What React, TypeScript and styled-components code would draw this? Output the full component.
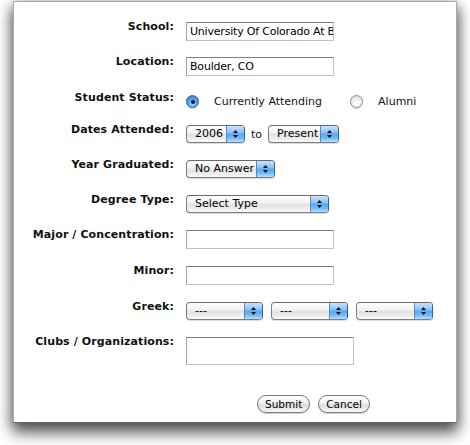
import React from "react";
import styled, { createGlobalStyle } from "styled-components";

const Global = createGlobalStyle`
  html, body { margin: 0; padding: 0; background: #fff; }
  body { font-family: "DejaVu Sans", Verdana, sans-serif; }
`;

const Page = styled.div`
  width: 470px;
  height: 445px;
  overflow: hidden;
  padding: 1px 0 0 13px;
  box-sizing: border-box;
`;

const Panel = styled.div`
  width: 444px;
  height: 422px;
  box-sizing: border-box;
  background: #fff;
  border: 1px solid #a9a9a9;
  border-bottom-color: #666;
  box-shadow: 0 9px 14px 1px rgba(0, 0, 0, 0.6), 0 2px 12px rgba(0, 0, 0, 0.3);
  padding-top: 20px;
  display: flex;
  flex-direction: column;
`;

const Row = styled.div<{ $h: number }>`
  display: grid;
  grid-template-columns: 160px auto;
  column-gap: 12px;
  align-items: start;
  height: ${(p) => p.$h}px;
  flex: none;
`;

const Label = styled.div`
  text-align: right;
  font: bold 11px/13px "DejaVu Sans", Verdana, sans-serif;
  letter-spacing: 0.1px;
  color: #111;
  margin-top: -2px;
  white-space: nowrap;
`;

const Controls = styled.div<{ $gap?: number; $pt?: number }>`
  display: flex;
  align-items: center;
  gap: ${(p) => p.$gap ?? 0}px;
  padding-top: ${(p) => p.$pt ?? 0}px;
`;

const TextInput = styled.div<{ $w: number; $h?: number }>`
  width: ${(p) => p.$w}px;
  height: ${(p) => p.$h ?? 19}px;
  box-sizing: border-box;
  border: 1px solid #c2c2c2;
  border-top-color: #7e7e7e;
  border-left-color: #a4a4a4;
  background: #fff;
  font: 11px/17px "DejaVu Sans", Verdana, sans-serif;
  letter-spacing: -0.2px;
  color: #000;
  padding-left: 3px;
  white-space: nowrap;
  overflow: hidden;
`;

const Popup = styled.div<{ $w: number }>`
  display: inline-flex;
  width: ${(p) => p.$w}px;
  height: 18px;
  box-sizing: border-box;
  border: 1px solid #7d7d7d;
  border-top-color: #6a6a6a;
  border-right-color: #2d5ea8;
  border-radius: 4px;
  overflow: hidden;
  background: linear-gradient(#ffffff, #f3f3f3 40%, #e2e2e2 55%, #ededed 80%, #fafafa);
  box-shadow: 0 1px 1px rgba(0, 0, 0, 0.15);
  flex: none;
`;

const PopupText = styled.span`
  flex: 1;
  padding-left: 8px;
  font: 11px/16px "DejaVu Sans", Verdana, sans-serif;
  color: #000;
  white-space: nowrap;
  overflow: hidden;
`;

const PopupArrows = styled.span`
  width: 17px;
  flex: none;
  border-left: 1px solid #5d86bd;
  background: linear-gradient(#c9e4fc, #8cc3f6 40%, #5aa6f0 52%, #6fbaf7 75%, #b6e0ff);
  display: flex;
  align-items: center;
  justify-content: center;
`;

const Arrows = () => (
  <svg width="5" height="10" viewBox="0 0 5 10">
    <polygon points="2.5,1 5,4 0,4" fill="#111" />
    <polygon points="0,6 5,6 2.5,9" fill="#111" />
  </svg>
);

const Select = ({ w, text }: { w: number; text: string }) => (
  <Popup $w={w}>
    <PopupText>{text}</PopupText>
    <PopupArrows>
      <Arrows />
    </PopupArrows>
  </Popup>
);

const RadioCircle = styled.span<{ $on?: boolean }>`
  width: 13px;
  height: 13px;
  border-radius: 50%;
  box-sizing: border-box;
  flex: none;
  display: flex;
  align-items: center;
  justify-content: center;
  border: 1px solid ${(p) => (p.$on ? "#3b5d92" : "#8e8e8e")};
  background: ${(p) =>
    p.$on
      ? "radial-gradient(circle at 50% 70%, #a8dcff 0%, #5aa3ee 45%, #2f6fc4 100%)"
      : "radial-gradient(circle at 50% 70%, #ffffff 0%, #f0f0f0 50%, #cfcfcf 100%)"};
  box-shadow: 0 1px 1px rgba(0, 0, 0, 0.2);
`;

const Dot = styled.span`
  width: 4px;
  height: 4px;
  border-radius: 50%;
  background: #0d1a2e;
`;

const OptionText = styled.span`
  font: 11px/13px "DejaVu Sans", Verdana, sans-serif;
  color: #111;
  white-space: nowrap;
`;

const RadioGroup = styled.div<{ $gap: number }>`
  display: flex;
  align-items: center;
  gap: 15px;
  margin-right: ${(p) => p.$gap}px;
`;

const ToText = styled.span`
  font: 11px/13px "DejaVu Sans", Verdana, sans-serif;
  color: #111;
  margin: 0 6px;
`;

const ButtonRow = styled.div`
  display: flex;
  gap: 8px;
  padding-left: 243px;
`;

const Button = styled.div`
  height: 18px;
  box-sizing: border-box;
  padding: 0 7px;
  border: 1px solid #7a7a7a;
  border-radius: 9px;
  background: linear-gradient(#ffffff, #f2f2f2 45%, #dedede 55%, #ececec 85%, #fbfbfb);
  box-shadow: 0 1px 1px rgba(0, 0, 0, 0.2);
  font: 10.5px/16px "DejaVu Sans", Verdana, sans-serif;
  color: #000;
`;

export default function App() {
  return (
    <>
      <Global />
      <Page>
        <Panel>
          <Row $h={35}>
            <Label>School:</Label>
            <Controls>
              <TextInput $w={148}>University Of Colorado At Boulder</TextInput>
            </Controls>
          </Row>
          <Row $h={36}>
            <Label>Location:</Label>
            <Controls>
              <TextInput $w={148}>Boulder, CO</TextInput>
            </Controls>
          </Row>
          <Row $h={32}>
            <Label>Student Status:</Label>
            <Controls $pt={2}>
              <RadioGroup $gap={28}>
                <RadioCircle $on>
                  <Dot />
                </RadioCircle>
                <OptionText>Currently Attending</OptionText>
              </RadioGroup>
              <RadioGroup $gap={0}>
                <RadioCircle />
                <OptionText>Alumni</OptionText>
              </RadioGroup>
            </Controls>
          </Row>
          <Row $h={35}>
            <Label>Dates Attended:</Label>
            <Controls>
              <Select w={59} text="2006" />
              <ToText>to</ToText>
              <Select w={71} text="Present" />
            </Controls>
          </Row>
          <Row $h={35}>
            <Label>Year Graduated:</Label>
            <Controls>
              <Select w={89} text="No Answer" />
            </Controls>
          </Row>
          <Row $h={35}>
            <Label>Degree Type:</Label>
            <Controls>
              <Select w={143} text="Select Type" />
            </Controls>
          </Row>
          <Row $h={36}>
            <Label>Major / Concentration:</Label>
            <Controls>
              <TextInput $w={148} />
            </Controls>
          </Row>
          <Row $h={36}>
            <Label>Minor:</Label>
            <Controls>
              <TextInput $w={148} />
            </Controls>
          </Row>
          <Row $h={35}>
            <Label>Greek:</Label>
            <Controls $gap={8}>
              <Select w={77} text="---" />
              <Select w={77} text="---" />
              <Select w={77} text="---" />
            </Controls>
          </Row>
          <Row $h={58}>
            <Label>Clubs / Organizations:</Label>
            <Controls>
              <TextInput $w={168} $h={28} />
            </Controls>
          </Row>
          <ButtonRow>
            <Button>Submit</Button>
            <Button>Cancel</Button>
          </ButtonRow>
        </Panel>
      </Page>
    </>
  );
}
